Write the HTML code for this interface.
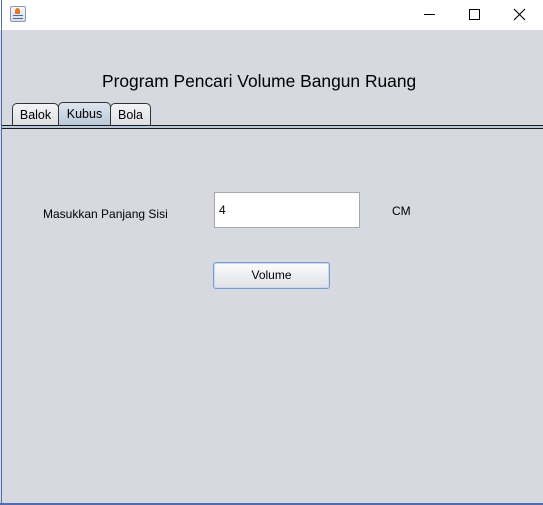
<!DOCTYPE html>
<html><head><style>
*{margin:0;padding:0;box-sizing:border-box}
body{width:543px;height:505px;overflow:hidden;background:#d6d9e0;font-family:"Liberation Sans",Arial,sans-serif;position:relative}
.abs{position:absolute}
.tab{position:absolute;top:103px;height:23px;border:1px solid #333;border-bottom:none;border-radius:5px 5px 0 0;background:linear-gradient(#f4f4f6,#dcdde2);font-size:12.5px;text-align:center;line-height:22px;color:#000}
</style></head><body>
<div class="abs" style="left:0;top:0;width:543px;height:30px;background:#fff"></div>
<div class="abs" style="left:1px;top:0;width:1px;height:505px;background:#4e6cae"></div>
<div class="abs" style="left:0;top:503px;width:543px;height:2px;background:#4e6cae"></div>
<div class="abs" style="left:10px;top:6px;width:16px;height:16px;border:1px solid #8a98b0;border-radius:2px;background:linear-gradient(#f6f8fb,#d8dee8)"></div>
<div class="abs" style="left:15px;top:8px;width:5px;height:6px;background:#e07a20;border-radius:50% 50% 0 0"></div>
<div class="abs" style="left:13px;top:15px;width:10px;height:4px;border-top:1px solid #4a6a9a;border-bottom:1px solid #4a6a9a"></div>
<div class="abs" style="left:424px;top:14px;width:11px;height:1px;background:#000"></div>
<div class="abs" style="left:469px;top:9px;width:11px;height:11px;border:1px solid #000"></div>
<svg class="abs" style="left:513px;top:8px" width="13" height="13"><path d="M1 1L12 12M12 1L1 12" stroke="#000" stroke-width="1.1"/></svg>
<div class="abs" style="left:102px;top:71px;font-size:17.4px;color:#000;white-space:nowrap">Program Pencari Volume Bangun Ruang</div>
<div class="tab" style="left:12px;width:47px">Balok</div>
<div class="tab" style="left:58px;width:53px;background:linear-gradient(#dde5ee,#b8c8d8);top:102px;height:24px">Kubus</div>
<div class="tab" style="left:110px;width:41px">Bola</div>
<div class="abs" style="left:2px;top:125px;width:541px;height:1px;background:#1a1a1a"></div>
<div class="abs" style="left:2px;top:126px;width:541px;height:2px;background:#b8c8d8"></div>
<div class="abs" style="left:2px;top:128px;width:541px;height:1px;background:#1a1a1a"></div>
<div class="abs" style="left:43px;top:207px;font-size:12px">Masukkan Panjang Sisi</div>
<div class="abs" style="left:214px;top:192px;width:146px;height:36px;background:#fff;border:1px solid #a8a8a8;font-size:12px;line-height:34px;padding-left:4px">4</div>
<div class="abs" style="left:392px;top:204px;font-size:12px">CM</div>
<div class="abs" style="left:213px;top:262px;width:117px;height:27px;border:1px solid #7a9ccc;border-radius:3px;box-shadow:inset 0 0 0 1px #c8d8ee;background:linear-gradient(#fdfdfd,#dfe1e6);font-size:12px;text-align:center;line-height:25px">Volume</div>
</body></html>
